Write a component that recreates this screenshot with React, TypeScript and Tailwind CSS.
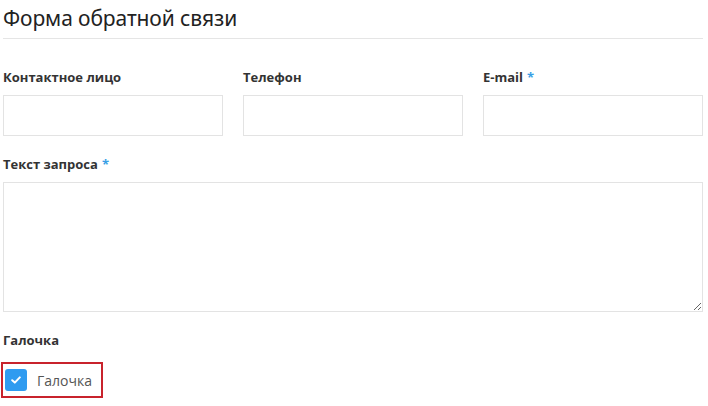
import React from "react";

export default function App() {
  const font = { fontFamily: '"Open Sans", "Noto Sans", sans-serif' };
  return (
    <div className="w-[708px] h-[406px] bg-white overflow-hidden" style={font}>
      <div className="pl-[3px] w-[703px]">
        <h1
          className="text-[21px] leading-[30px] pt-[3px] text-[#222] font-normal tracking-[-0.1px]"
          style={{ fontFamily: '"Noto Sans", "Open Sans", sans-serif' }}
        >
          Форма обратной связи
        </h1>
        <div className="mt-[5px] h-px bg-[#e5e5e5]" />
        <div className="grid grid-cols-3 gap-x-[20px] mt-[29px]">
          {[
            { l: "Контактное лицо", r: false },
            { l: "Телефон", r: false },
            { l: "E-mail", r: true },
          ].map((f) => (
            <div key={f.l} className="flex flex-col">
              <label className="text-[13px] leading-[18px] font-bold text-[#333]">
                {f.l}
                {f.r && <span className="text-[#3a9fe6] ml-[4px]">*</span>}
              </label>
              <input className="mt-[9px] h-[41px] border border-[#e3e3e3] bg-white outline-none" />
            </div>
          ))}
        </div>
        <div className="mt-[19px] flex flex-col">
          <label className="text-[13px] leading-[18px] font-bold text-[#333]">
            Текст запроса<span className="text-[#3a9fe6] ml-[4px]">*</span>
          </label>
          <textarea className="mt-[9px] h-[130px] border border-[#e3e3e3] bg-white outline-none resize-y" />
        </div>
        <div className="mt-[19px] text-[13px] leading-[18px] font-bold text-[#333]">Галочка</div>
      </div>
      <div className="mt-[13px] ml-[1px] w-[102px] h-[36px] border-2 border-[#c8232c] flex items-center">
        <div className="ml-[2px] w-[22px] h-[22px] rounded-[3px] bg-[#2f9bf0] flex items-center justify-center">
          <svg width="10" height="8" viewBox="0 0 10 8">
            <path d="M1.2 4.2 L3.8 6.6 L8.8 1.4" stroke="white" strokeWidth="2" fill="none" strokeLinecap="round" strokeLinejoin="round" />
          </svg>
        </div>
        <span className="ml-[10px] text-[14px] text-[#555]">Галочка</span>
      </div>
    </div>
  );
}
